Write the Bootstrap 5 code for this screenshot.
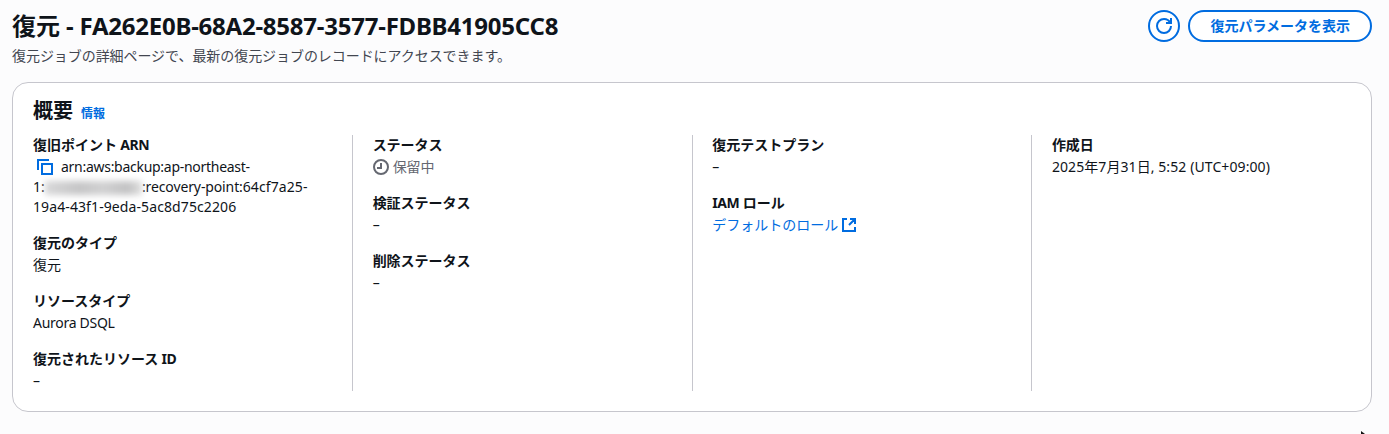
<!DOCTYPE html>
<html lang="ja">
<head>
<meta charset="utf-8">
<meta name="viewport" content="width=device-width, initial-scale=1">
<title>復元</title>
<link href="https://cdn.jsdelivr.net/npm/bootstrap@5.3.0/dist/css/bootstrap.min.css" rel="stylesheet">
<style>
  body { background: #fcfcfd; color: #0f141a; font: 14px/20px "Noto Sans", "Noto Sans CJK JP", sans-serif; overflow: hidden; }
  a { color: #006ce0; text-decoration: none; }
  svg { display: block; fill: none; stroke: currentColor; stroke-width: 2; }
  .page-head { padding: 10px 17px 0 12px; height: 82px; }
  h1 { font-size: 24px; line-height: 30px; font-weight: 700; margin: 1px 0 5px; }
  h1 .lat { letter-spacing: -.24px; font-weight: 700; }
  .desc { color: #424650; letter-spacing: -.06px; }
  .act { height: 32px; border: 2px solid #006ce0; border-radius: 20px; color: #006ce0; background: #fff; font-size: 14px; line-height: 20px; font-weight: 700; padding: 4px 20px; }
  .act.round { width: 32px; padding: 0; }
  .panel { margin: 0 17px 0 12px; height: 330px; border: 1px solid #c6c6cd; border-radius: 16px; background: #fff; }
  h2 { font-size: 20px; line-height: 24px; font-weight: 700; margin: 0; }
  .panel-head { padding: 16px 20px 0; height: 52px; }
  .info { font-size: 12px; font-weight: 700; }
  .fields { height: 256px; margin-left: 1px; }
  .fields > .col { padding: 0 20px 0 19.5px; height: 256px; }
  .fields > .col:first-child { padding-left: 19px; }
  .fields > .col + .col { border-left: 1px solid #c6c6cd; }
  dt { margin-bottom: 2px; }
  dd { margin-bottom: 16px; }
  .lat { letter-spacing: -.28px; }
  .num { letter-spacing: .1px; }
  .arn-tail { letter-spacing: -.12px; }
  dt .lat { letter-spacing: -.4px; }
  .copy-icon { display: inline-block; vertical-align: top; margin: 2px 8px 0 4px; color: #006ce0; }
  .redacted { display: inline-block; width: 97px; height: 14px; vertical-align: -3px; background: linear-gradient(90deg, #d8d8d9, #c5c5c6 35%, #d0d0d1 60%, #c2c2c3 85%, #dedede); filter: blur(3px); }
  .pending { color: #656871; }
  .ext { margin-left: 3px; }
  .pointer-tip { position: fixed; left: 1361px; top: 431px; stroke: none; fill: #111; }
</style>
</head>
<body>
<header class="page-head d-flex justify-content-between align-items-start">
  <div>
    <h1>復元<span class="lat"> - FA262E0B-68A2-8587-3577-FDBB41905CC8</span></h1>
    <p class="desc m-0">復元ジョブの詳細ページで、最新の復元ジョブのレコードにアクセスできます。</p>
  </div>
  <div class="d-flex gap-2">
    <button class="btn act round d-flex align-items-center justify-content-center" aria-label="更新"><svg width="16" height="16" viewBox="0 0 16 16"><path d="M15 8c0 3.870-3.130 7-7 7s-7-3.130-7-7 3.130-7 7-7c2.790 0 5.200 1.630 6.330 4M15 0v5h-5"/></svg></button>
    <button class="btn act">復元パラメータを表示</button>
  </div>
</header>
<section class="panel">
  <div class="panel-head d-flex align-items-baseline gap-2">
    <h2>概要</h2><a class="info" href="#">情報</a>
  </div>
  <div class="row g-0 fields">
    <dl class="col m-0">
      <dt>復旧ポイント<span class="lat"> ARN</span></dt>
      <dd><span class="copy-icon"><svg width="16" height="16" viewBox="0 0 16 16"><path d="M5 5h10v10H5zM1 11V1h11"/></svg></span><span class="lat">arn:aws:backup:ap-northeast-</span><br><span class="num">1:</span><span class="redacted"></span><span class="arn-tail">:recovery-point:</span><span class="num">64cf7a25-<br>19a4-43f1-9eda-5ac8d75c2206</span></dd>
      <dt>復元のタイプ</dt>
      <dd>復元</dd>
      <dt>リソースタイプ</dt>
      <dd class="lat">Aurora DSQL</dd>
      <dt>復元されたリソース<span class="lat"> ID</span></dt>
      <dd>–</dd>
    </dl>
    <dl class="col m-0">
      <dt>ステータス</dt>
      <dd class="pending d-flex align-items-center gap-1"><svg width="16" height="16" viewBox="0 0 16 16"><circle cx="8" cy="8" r="7"/><path d="M8 4v5H4"/></svg>保留中</dd>
      <dt>検証ステータス</dt>
      <dd>–</dd>
      <dt>削除ステータス</dt>
      <dd>–</dd>
    </dl>
    <dl class="col m-0">
      <dt>復元テストプラン</dt>
      <dd>–</dd>
      <dt><span class="lat">IAM </span>ロール</dt>
      <dd><a href="#" class="d-flex align-items-center">デフォルトのロール<svg class="ext" width="16" height="16" viewBox="0 0 16 16"><path d="M6 2H2v12h12v-4M9 2h5v5M14 2 8 8"/></svg></a></dd>
    </dl>
    <dl class="col m-0">
      <dt>作成日</dt>
      <dd><span class="num">2025</span>年<span class="num">7</span>月<span class="num">31</span>日<span class="num">, 5:52 (UTC+09:00)</span></dd>
    </dl>
  </div>
</section>
<svg class="pointer-tip" width="4" height="3" viewBox="0 0 4 3"><path d="M0 0 4 3H0z"/></svg>
</body>
</html>
